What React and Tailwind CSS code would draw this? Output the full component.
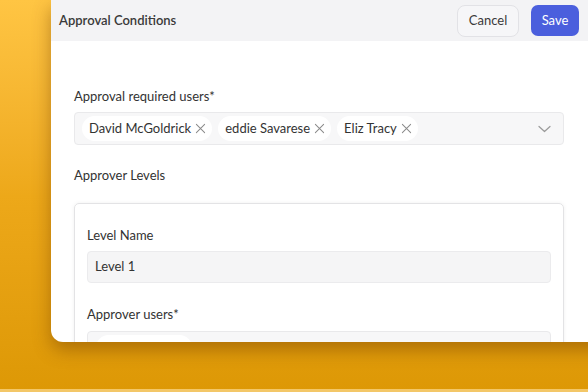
import React from "react";

const users = ["David McGoldrick", "eddie Savarese", "Eliz Tracy"];

function XIcon() {
  return (
    <svg width="11" height="11" viewBox="0 0 12 12" fill="none" stroke="#8a8a8a" strokeWidth="1.1" strokeLinecap="round">
      <path d="M1.5 1.5l9 9M10.5 1.5l-9 9" />
    </svg>
  );
}

function Chip({ name }) {
  return (
    <div className="flex items-center gap-[4px] h-[25px] pl-[7px] pr-[6px] rounded-full bg-white text-[13px] text-[#333]">
      <span>{name}</span>
      <XIcon />
    </div>
  );
}

export default function App() {
  return (
    <div
      className="w-[588px] h-[392px] overflow-hidden flex flex-col bg-gradient-to-b from-[#FFC543] via-[#EDA819] to-[#DD9805]"
      style={{ fontFamily: 'Lato, "Noto Sans", sans-serif' }}
    >
      <div className="ml-[51px] w-[560px] h-[342px] shrink-0 bg-white rounded-bl-[12px] overflow-hidden shadow-[0_8px_18px_rgba(110,60,0,0.45)]">
        {/* header */}
        <div className="h-[41px] bg-[#F3F3F5] flex items-center pl-[8px] pr-[32px]">
          <h1 className="text-[13px] font-semibold text-[#3a3a3a] flex-1">Approval Conditions</h1>
          <button className="h-[32px] w-[62px] rounded-[8px] border border-[#E2E2E6] bg-[#F6F6F8] text-[13px] text-[#3a3a3a]">
            Cancel
          </button>
          <button className="ml-[12px] h-[31px] w-[48px] rounded-[7px] bg-[#4B5FDD] text-[13px] text-white">
            Save
          </button>
        </div>

        {/* body */}
        <div className="pl-[23px] pr-[47px] pt-[46px]">
          <label className="block text-[13px] leading-[18px] text-[#333]">Approval required users*</label>
          <div className="mt-[7px] h-[33px] rounded-[4px] border border-[#E9E9EB] bg-[#F7F7F8] flex items-center pl-[7px] pr-[12px] gap-[6px]">
            {users.map((u) => (
              <Chip key={u} name={u} />
            ))}
            <div className="flex-1" />
            <svg width="13" height="8" viewBox="0 0 13 8" fill="none" stroke="#9a9a9a" strokeWidth="1.2" strokeLinecap="round" strokeLinejoin="round">
              <path d="M1 1.5l5.5 5 5.5-5" />
            </svg>
          </div>

          <div className="mt-[21px] text-[13px] leading-[18px] text-[#333]">Approver Levels</div>

          <div className="mt-[19px] rounded-[5px] border border-[#E3E3E5] shadow-[0_0_4px_rgba(0,0,0,0.06)] px-[12px] pt-[22px] pb-[20px]">
            <label className="block text-[13px] leading-[18px] text-[#333]">Level Name</label>
            <div className="mt-[7px] h-[32px] rounded-[4px] border border-[#EBEBED] bg-[#F5F5F6] flex items-center px-[7px] text-[13px] text-[#333]">
              Level 1
            </div>
            <label className="block mt-[22px] text-[13px] leading-[18px] text-[#333]">Approver users*</label>
            <div className="mt-[8px] h-[33px] rounded-[4px] border border-[#E9E9EB] bg-[#F7F7F8] flex items-center pl-[8px]">
              <div className="h-[25px] w-[96px] rounded-full bg-white" />
            </div>
          </div>
        </div>
      </div>
      <div className="flex-1" />
      <div className="h-[3px] bg-[#F3C768]" />
    </div>
  );
}
